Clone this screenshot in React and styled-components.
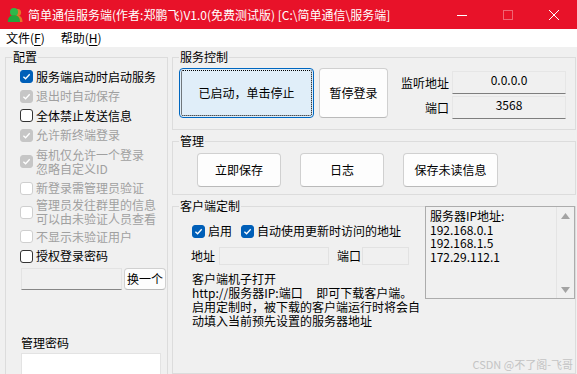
import styled, { createGlobalStyle } from "styled-components";

const GlobalStyle = createGlobalStyle`
  html, body { margin: 0; padding: 0; }
  body {
    width: 577px; height: 374px; overflow: hidden; background: #f0f0f0;
    font-family: "Noto Sans CJK SC", "Noto Sans", sans-serif;
    font-size: 12px; color: #000;
  }
`;

const Window = styled.div`
  position: relative;
  width: 577px;
  height: 374px;
  display: flex;
  flex-direction: column;
  overflow: hidden;
  background: #f0f0f0;
`;

const TitleBar = styled.div`
  height: 29px;
  flex: none;
  background: #e81229;
  color: #fff;
  display: flex;
  align-items: center;
  padding-left: 7px;
`;

const TitleText = styled.div`
  flex: 1;
  margin-left: 5px;
  font-size: 12px;
  line-height: 16px;
  white-space: nowrap;
`;

const WinBtn = styled.div`
  width: 46px;
  height: 29px;
  display: flex;
  align-items: center;
  justify-content: center;
`;

const MenuBar = styled.div`
  height: 18px;
  flex: none;
  background: #fff;
  display: flex;
  align-items: center;
  gap: 16px;
  padding-left: 6px;
  line-height: 16px;
`;

const Main = styled.div`
  flex: 1;
  min-height: 0;
  display: flex;
  gap: 4px;
  padding: 2px 0 0 5px;
`;

const Group = styled.fieldset`
  margin: 0;
  padding: 0;
  min-width: 0;
  box-sizing: border-box;
  border: 1px solid #dcdcdc;
  width: ${(p) => (p.$w ? `${p.$w}px` : "auto")};
  height: ${(p) => (p.$h ? `${p.$h}px` : "auto")};
  flex: ${(p) => (p.$grow ? 1 : "none")};
`;

const Legend = styled.legend`
  margin-left: 6px;
  padding: 0 1px;
  font-size: 12px;
  line-height: 16px;
`;

const CheckList = styled.div`
  display: flex;
  flex-direction: column;
  padding: 2px 0 0 14px;
`;

const CheckRow = styled.label`
  display: flex;
  align-items: center;
  gap: 3px;
  padding-top: ${(p) => p.$pt ?? 2.75}px;
  padding-bottom: ${(p) => p.$pb ?? 2.75}px;
  line-height: 14px;
  white-space: pre;
  color: ${(p) => (p.$disabled ? "#a0a0a0" : "#000")};
`;

const Box = styled.span`
  flex: none;
  width: 13px;
  height: 13px;
  box-sizing: border-box;
  border-radius: 3px;
  display: inline-flex;
  align-items: center;
  justify-content: center;
  background: ${(p) => (p.$checked ? (p.$disabled ? "#c6c6c6" : "#005fb8") : "#fff")};
  border: 1px solid
    ${(p) => (p.$checked ? (p.$disabled ? "#c6c6c6" : "#005fb8") : p.$disabled ? "#cfcfcf" : "#333")};
`;

const PassRow = styled.div`
  display: flex;
  gap: 2px;
  margin: 2px 0 0 1px;
`;

const TextBox = styled.div`
  box-sizing: border-box;
  width: ${(p) => p.$w}px;
  height: ${(p) => p.$h}px;
  margin-left: ${(p) => p.$ml || 0}px;
  background: ${(p) => (p.$white ? "#fff" : "#f0f0f0")};
  border: 1px solid #e3e3e3;
  border-bottom-color: #868686;
`;

const FlatBox = styled.div`
  box-sizing: border-box;
  width: ${(p) => p.$w}px;
  height: 18px;
  background: #f0f0f0;
  border: 1px solid #e2e2e2;
`;

const Btn = styled.button`
  box-sizing: border-box;
  flex: none;
  width: ${(p) => p.$w}px;
  height: ${(p) => p.$h}px;
  padding: 0;
  font: inherit;
  font-size: 12px;
  line-height: 14px;
  color: #000;
  background: ${(p) => (p.$active ? "#e0eef9" : "#fdfdfd")};
  border: 1px solid ${(p) => (p.$active ? "#0067c0" : "#d0d0d0")};
  border-bottom-color: ${(p) => (p.$active ? "#0067c0" : "#bababa")};
  border-radius: 4px;
  outline: ${(p) => (p.$active ? "1px dotted #000" : "none")};
  outline-offset: -3px;
`;

const FieldLabel = styled.div`
  margin: ${(p) => p.$m || 0};
  line-height: 14px;
  white-space: nowrap;
`;

const RightCol = styled.div`
  position: relative;
  width: 404px;
  display: flex;
  flex-direction: column;
  gap: 3px;
`;

const ServiceRow = styled.div`
  display: flex;
  align-items: flex-start;
  gap: 5px;
  padding: 3px 0 0 6px;
`;

const FieldGrid = styled.div`
  display: grid;
  grid-template-columns: auto 114px;
  column-gap: 3px;
  row-gap: 2px;
  align-items: center;
  margin: 3px 0 0 8px;
  & > ${FieldLabel} { justify-self: end; }
`;

const ReadField = styled.div`
  box-sizing: border-box;
  height: 23px;
  background: #f0f0f0;
  border: 1px solid #e6e6e6;
  border-bottom-color: #7e7e7e;
  text-align: center;
  line-height: 16px;
`;

const ManageRow = styled.div`
  display: flex;
  gap: 19px;
  padding: 4px 0 0 24px;
`;

const ClientBody = styled.div`
  padding: 7px 0 0 19px;
`;

const InlineChecks = styled.div`
  display: flex;
  gap: 9px;
`;

const AddrRow = styled.div`
  display: flex;
  align-items: center;
  margin: 6px 0 0 -1px;
`;

const Note = styled.div`
  margin-top: 7px;
  line-height: 14px;
  white-space: pre;
`;

const ListBox = styled.div`
  position: absolute;
  top: 157px;
  left: 253px;
  width: 150px;
  height: 93px;
  box-sizing: border-box;
  border: 1px solid #acacac;
  background: #f0f0f0;
  display: flex;
`;

const ListText = styled.div`
  flex: 1;
  padding: 2px 0 0 4px;
  line-height: 13.7px;
  white-space: pre;
`;

const ScrollBar = styled.div`
  width: 17px;
  border-left: 1px solid #e4e4e4;
  display: flex;
  flex-direction: column;
  justify-content: space-between;
  align-items: center;
  padding: 6px 0 5px;
`;

const Watermark = styled.div`
  position: absolute;
  right: 4px;
  bottom: 3px;
  font-size: 11px;
  line-height: 14px;
  color: #c4c4c4;
`;

const Ul = styled.span`
  text-decoration: underline;
  text-underline-offset: 2px;
`;

const Check = ({ checked, disabled, children, pt, pb }) => (
  <CheckRow $disabled={disabled} $pt={pt} $pb={pb}>
    <Box $checked={checked} $disabled={disabled}>
      {checked && (
        <svg width="9" height="9" viewBox="0 0 9 9">
          <path d="M1.4 4.7 L3.6 6.8 L7.7 2.3" fill="none" stroke="#fff" strokeWidth="1.3" />
        </svg>
      )}
    </Box>
    <span>{children}</span>
  </CheckRow>
);

const AppIcon = () => (
  <svg width="16" height="16" viewBox="0 0 16 16">
    <circle cx="10.5" cy="5.5" r="3.6" fill="#e0782a" />
    <path d="M5.5 15 C5.5 10 8 8.5 10.5 8.5 C13 8.5 15.5 10 15.5 15 Z" fill="#e0782a" />
    <circle cx="7" cy="5" r="4" fill="#2fb84a" />
    <path d="M0.8 15 C0.8 10 3.5 8.3 7 8.3 C10.5 8.3 13 10 13 15 Z" fill="#23a53c" />
  </svg>
);

export default function App() {
  return (
    <>
      <GlobalStyle />
      <Window>
        <TitleBar>
          <AppIcon />
          <TitleText>简单通信服务端(作者:郑鹏飞)V1.0(免费测试版) [C:\简单通信\服务端]</TitleText>
          <WinBtn>
            <svg width="10" height="10" viewBox="0 0 10 10">
              <path d="M0 5.5 H10" stroke="#fff" strokeWidth="1" />
            </svg>
          </WinBtn>
          <WinBtn>
            <svg width="10" height="10" viewBox="0 0 10 10">
              <rect x="0.5" y="0.5" width="9" height="9" fill="none" stroke="rgba(255,255,255,0.35)" />
            </svg>
          </WinBtn>
          <WinBtn>
            <svg width="10" height="10" viewBox="0 0 10 10">
              <path d="M0 0 L10 10 M10 0 L0 10" stroke="#fff" strokeWidth="1" />
            </svg>
          </WinBtn>
        </TitleBar>
        <MenuBar>
          <span>文件(<Ul>F</Ul>)</span>
          <span>帮助(<Ul>H</Ul>)</span>
        </MenuBar>
        <Main>
          <Group $w={163} $h={340}>
            <Legend>配置</Legend>
            <CheckList>
              <Check checked>服务端启动时启动服务</Check>
              <Check checked disabled>退出时自动保存</Check>
              <Check>全体禁止发送信息</Check>
              <Check checked disabled>允许新终端登录</Check>
              <Check checked disabled>{"每机仅允许一个登录\n忽略自定义ID"}</Check>
              <Check disabled>新登录需管理员验证</Check>
              <Check disabled pt={0} pb={1}>{"管理员发往群里的信息\n可以由未验证人员查看"}</Check>
              <Check disabled>不显示未验证用户</Check>
              <Check>授权登录密码</Check>
              <PassRow>
                <TextBox $w={101} $h={22} />
                <Btn $w={42} $h={22}>换一个</Btn>
              </PassRow>
              <FieldLabel $m="46px 0 3px 1px">管理密码</FieldLabel>
              <TextBox $w={140} $h={22} $white $ml={1} />
            </CheckList>
          </Group>
          <RightCol>
            <Group $h={81}>
              <Legend>服务控制</Legend>
              <ServiceRow>
                <Btn $w={135} $h={50} $active>已启动，单击停止</Btn>
                <Btn $w={69} $h={50}>暂停登录</Btn>
                <FieldGrid>
                  <FieldLabel>监听地址</FieldLabel>
                  <ReadField>0.0.0.0</ReadField>
                  <FieldLabel>端口</FieldLabel>
                  <ReadField>3568</ReadField>
                </FieldGrid>
              </ServiceRow>
            </Group>
            <Group $h={62}>
              <Legend>管理</Legend>
              <ManageRow>
                <Btn $w={84} $h={34}>立即保存</Btn>
                <Btn $w={84} $h={34}>日志</Btn>
                <Btn $w={95} $h={34}>保存未读信息</Btn>
              </ManageRow>
            </Group>
            <Group $grow>
              <Legend>客户端定制</Legend>
              <ClientBody>
                <InlineChecks>
                  <Check checked pt={3} pb={3}>启用</Check>
                  <Check checked pt={3} pb={3}>自动使用更新时访问的地址</Check>
                </InlineChecks>
                <AddrRow>
                  <FieldLabel $m="0 4px 0 0">地址</FieldLabel>
                  <FlatBox $w={110} />
                  <FieldLabel $m="0 1px 0 8px">端口</FieldLabel>
                  <FlatBox $w={47} />
                </AddrRow>
                <Note>
                  {"客户端机子打开\nhttp://服务器IP:端口     即可下载客户端。\n启用定制时，被下载的客户端运行时将会自\n动填入当前预先设置的服务器地址"}
                </Note>
              </ClientBody>
            </Group>
            <ListBox>
              <ListText>{"服务器IP地址:\n192.168.0.1\n192.168.1.5\n172.29.112.1"}</ListText>
              <ScrollBar>
                <svg width="9" height="6" viewBox="0 0 9 6">
                  <path d="M0 6 L4.5 0 L9 6 Z" fill="#a3a3a3" />
                </svg>
                <svg width="9" height="6" viewBox="0 0 9 6">
                  <path d="M0 0 L4.5 6 L9 0 Z" fill="#a3a3a3" />
                </svg>
              </ScrollBar>
            </ListBox>
          </RightCol>
        </Main>
        <Watermark>CSDN @不了阁-飞哥</Watermark>
      </Window>
    </>
  );
}
